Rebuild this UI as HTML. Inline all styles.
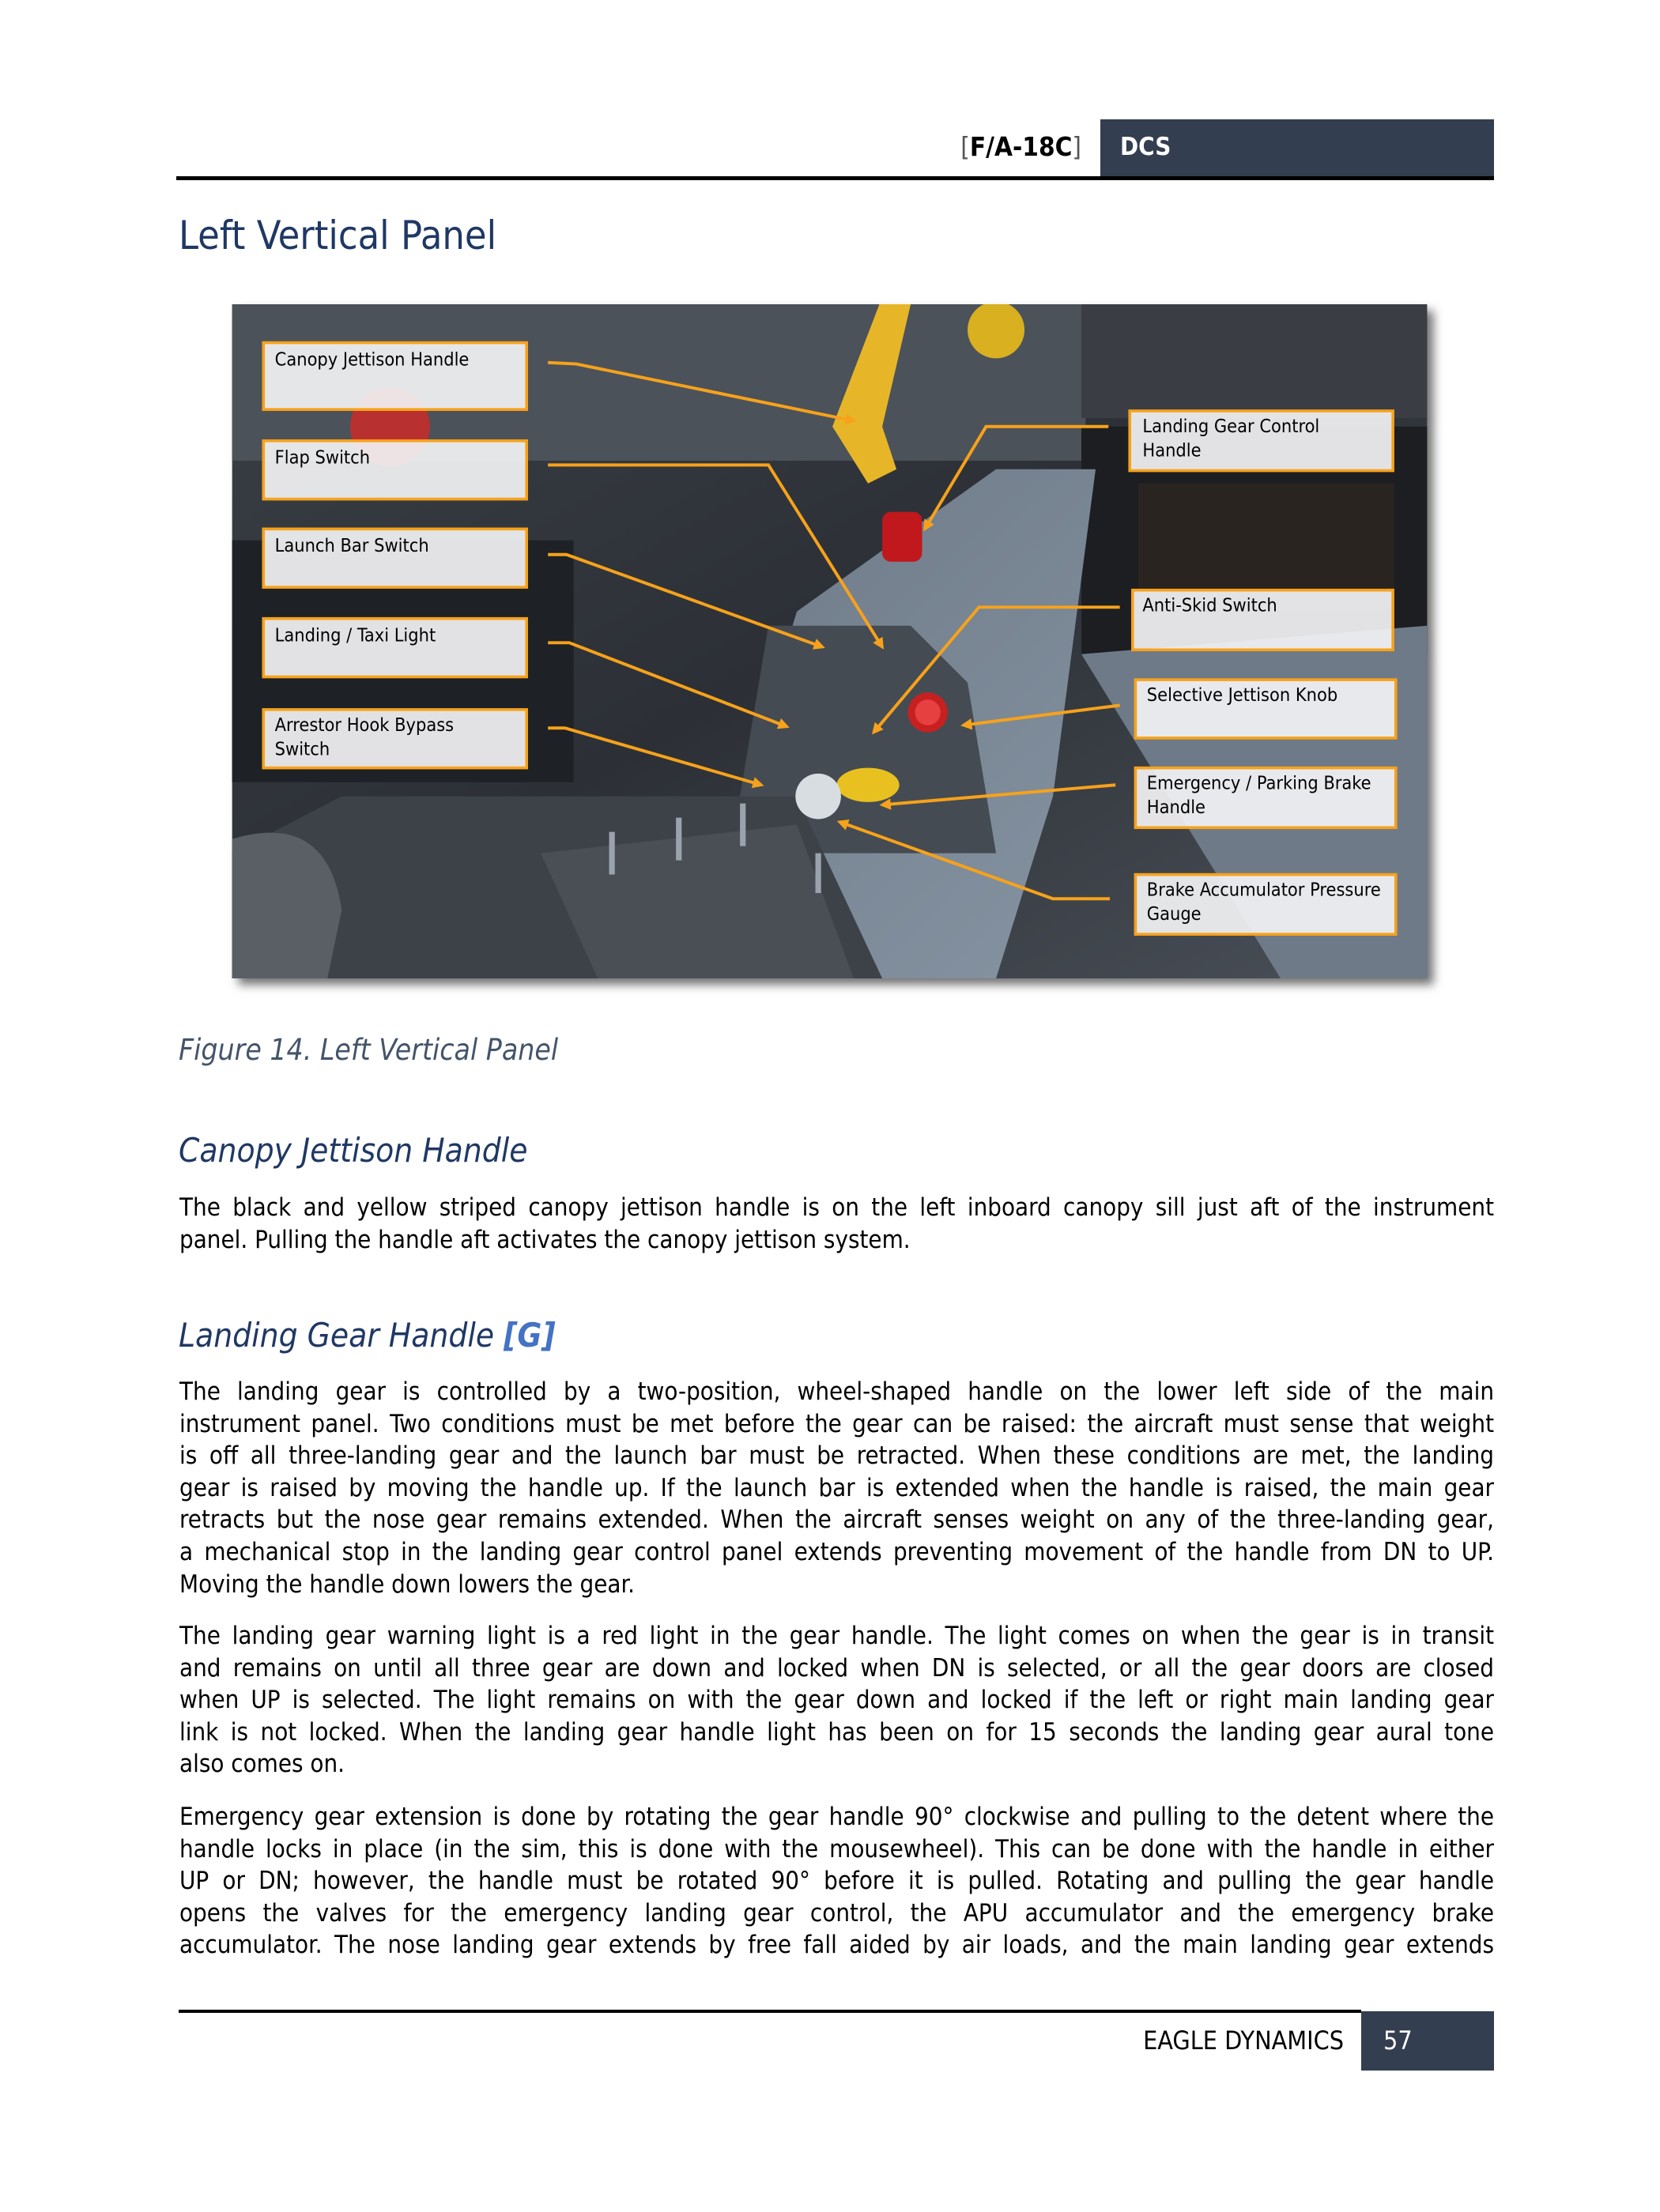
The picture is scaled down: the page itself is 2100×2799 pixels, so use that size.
<!DOCTYPE html>
<html><head><meta charset="utf-8"><style>
html,body{margin:0;padding:0;background:#fff}
body{width:2100px;height:2799px;position:relative;overflow:hidden;font-family:"DejaVu Sans Condensed","Liberation Sans",sans-serif}
.abs{position:absolute}
.hdrbox{left:1392px;top:151px;width:498px;height:76px;background:#333e50}
.hdrline{left:223px;top:223px;width:1667px;height:5px;background:#000}
.fa{right:732px;top:166px;font-size:33px;font-weight:bold;color:#000;letter-spacing:0px}
.fa span{color:#555;font-weight:normal}
.dcs{left:1417px;top:168px;font-size:31px;font-weight:bold;color:#fff}
.title{left:226px;top:269px;font-size:50px;color:#1f3864}
.cap{left:226px;top:1307px;font-size:37px;font-style:italic;color:#44546a}
.h2{left:226px;font-size:42px;font-style:italic;color:#1f3864}
.txt{left:227px;width:1663px;font-size:31px;color:#000;line-height:40.6px}
.txt div{text-align:justify;text-align-last:justify;white-space:nowrap;height:40.6px}
.txt div.l{text-align-last:left}
.fline{left:226px;top:2543px;width:1496px;height:4px;background:#000}
.fbox{left:1722px;top:2545px;width:168px;height:75px;background:#333e50}
.ed{right:400px;top:2563px;font-size:32px;color:#000}
.pg{left:1750px;top:2563px;font-size:32px;color:#fff}
</style></head><body>
<div class="abs hdrbox"></div>
<div class="abs hdrline"></div>
<div class="abs fa"><span>[</span>F/A-18C<span>]</span></div>
<div class="abs dcs">DCS</div>
<div class="abs title">Left Vertical Panel</div>

<svg class="abs" style="left:293px;top:385px;filter:drop-shadow(8px 8px 6px rgba(0,0,0,0.55))" width="1513" height="853" viewBox="163 214 840 474">
<defs>
<linearGradient id="bg" x1="0" y1="0" x2="1" y2="1"><stop offset="0" stop-color="#3a3f46"/><stop offset="0.5" stop-color="#2c3036"/><stop offset="1" stop-color="#4a5058"/></linearGradient>
<linearGradient id="pn" x1="0" y1="0" x2="1" y2="1"><stop offset="0" stop-color="#6a7582"/><stop offset="1" stop-color="#8593a2"/></linearGradient>
<marker id="ar" markerWidth="8" markerHeight="8" refX="6" refY="4" orient="auto" markerUnits="userSpaceOnUse"><path d="M0,0 L8,4 L0,8 Z" fill="#f7a21b"/></marker>
</defs>
<rect x="163" y="214" width="840" height="474" fill="url(#bg)"/>
<rect x="163" y="214" width="600" height="110" fill="#4c525a"/>
<rect x="163" y="380" width="240" height="170" fill="#1e2125"/>
<rect x="760" y="214" width="243" height="80" fill="#3a3e44"/>
<rect x="760" y="300" width="243" height="160" fill="#1c1e22"/>
<rect x="800" y="340" width="180" height="90" fill="#2a2420"/>
<path d="M760 460 L1003 440 L1003 688 L900 688 Z" fill="#6e7a88"/>
<path d="M560 430 L700 330 L770 330 L740 560 L700 688 L420 688 L380 620 L520 560 Z" fill="url(#pn)"/>
<path d="M540 440 L640 440 L680 480 L700 600 L560 600 L520 560 Z" fill="#454b52"/>
<path d="M240 560 L560 560 L620 688 L163 688 L163 600 Z" fill="#3d4249"/>
<path d="M380 600 L560 580 L600 688 L420 688 Z" fill="#4a4f56"/>
<path d="M163 590 Q230 570 240 640 L230 688 L163 688 Z" fill="#5a5f66"/>
<g fill="#9aa3ad"><rect x="428" y="585" width="4" height="30"/><rect x="475" y="575" width="4" height="30"/><rect x="520" y="565" width="4" height="30"/><rect x="573" y="600" width="4" height="28"/></g>
<path d="M618 214 L640 214 L620 300 L630 330 L610 340 L585 300 Z" fill="#e7b628"/>
<circle cx="700" cy="232" r="20" fill="#d8b020"/>
<rect x="620" y="360" width="28" height="35" rx="6" fill="#c0181c"/>
<circle cx="652" cy="501" r="14" fill="#c72020"/>
<circle cx="652" cy="501" r="9" fill="#e84040"/>
<ellipse cx="610" cy="552" rx="22" ry="12" fill="#e8c020"/>
<circle cx="575" cy="560" r="16" fill="#d8dde2"/>
<circle cx="274" cy="300" r="28" fill="#b83030"/>
<g fill="#f1f1f3" fill-opacity="0.93" stroke="#f7a21b" stroke-width="2">
<rect x="185" y="241" width="185" height="47"/>
<rect x="185" y="310" width="185" height="41"/>
<rect x="185" y="372" width="185" height="41"/>
<rect x="185" y="435" width="185" height="41"/>
<rect x="185" y="499" width="185" height="41"/>
<rect x="794" y="289" width="185" height="42"/>
<rect x="796" y="415" width="183" height="42"/>
<rect x="798" y="478" width="183" height="41"/>
<rect x="798" y="540" width="183" height="42"/>
<rect x="798" y="615" width="183" height="42"/>
</g>
<g font-family="DejaVu Sans Condensed, Liberation Sans, sans-serif" font-size="13" fill="#000">
<text x="193" y="257">Canopy Jettison Handle</text>
<text x="193" y="326">Flap Switch</text>
<text x="193" y="388">Launch Bar Switch</text>
<text x="193" y="451">Landing / Taxi Light</text>
<text x="193" y="514">Arrestor Hook Bypass</text>
<text x="193" y="531">Switch</text>
<text x="803" y="304">Landing Gear Control</text>
<text x="803" y="321">Handle</text>
<text x="803" y="430">Anti-Skid Switch</text>
<text x="806" y="493">Selective Jettison Knob</text>
<text x="806" y="555">Emergency / Parking Brake</text>
<text x="806" y="572">Handle</text>
<text x="806" y="630">Brake Accumulator Pressure</text>
<text x="806" y="647">Gauge</text>
</g>
<g fill="none" stroke="#f7a21b" stroke-width="2.2" marker-end="url(#ar)">
<polyline points="385,255 405,256 600,296"/>
<polyline points="385,327 540,327 620,455"/>
<polyline points="385,390 398,390 578,455"/>
<polyline points="385,452 400,452 553,511"/>
<polyline points="385,512 397,512 535,552"/>
<polyline points="779,300 693,300 650,372"/>
<polyline points="787,427 688,427 614,515"/>
<polyline points="787,496 677,510"/>
<polyline points="784,552 620,566"/>
<polyline points="780,632 740,632 590,578"/>
</g>
</svg>

<div class="abs cap">Figure 14. Left Vertical Panel</div>
<div class="abs h2" style="top:1431px">Canopy Jettison Handle</div>
<div class="abs txt" style="top:1508px">
<div>The black and yellow striped canopy jettison handle is on the left inboard canopy sill just aft of the instrument</div>
<div class="l">panel. Pulling the handle aft activates the canopy jettison system.</div>
</div>
<div class="abs h2" style="top:1665px">Landing Gear Handle <b style="color:#4472c4">[G]</b></div>
<div class="abs txt" style="top:1741px">
<div>The landing gear is controlled by a two-position, wheel-shaped handle on the lower left side of the main</div>
<div>instrument panel. Two conditions must be met before the gear can be raised: the aircraft must sense that weight</div>
<div>is off all three-landing gear and the launch bar must be retracted. When these conditions are met, the landing</div>
<div>gear is raised by moving the handle up. If the launch bar is extended when the handle is raised, the main gear</div>
<div>retracts but the nose gear remains extended. When the aircraft senses weight on any of the three-landing gear,</div>
<div>a mechanical stop in the landing gear control panel extends preventing movement of the handle from DN to UP.</div>
<div class="l">Moving the handle down lowers the gear.</div>
</div>
<div class="abs txt" style="top:2050px">
<div>The landing gear warning light is a red light in the gear handle. The light comes on when the gear is in transit</div>
<div>and remains on until all three gear are down and locked when DN is selected, or all the gear doors are closed</div>
<div>when UP is selected. The light remains on with the gear down and locked if the left or right main landing gear</div>
<div>link is not locked. When the landing gear handle light has been on for 15 seconds the landing gear aural tone</div>
<div class="l">also comes on.</div>
</div>
<div class="abs txt" style="top:2279px">
<div>Emergency gear extension is done by rotating the gear handle 90° clockwise and pulling to the detent where the</div>
<div>handle locks in place (in the sim, this is done with the mousewheel). This can be done with the handle in either</div>
<div>UP or DN; however, the handle must be rotated 90° before it is pulled. Rotating and pulling the gear handle</div>
<div>opens the valves for the emergency landing gear control, the APU accumulator and the emergency brake</div>
<div>accumulator. The nose landing gear extends by free fall aided by air loads, and the main landing gear extends</div>
</div>
<div class="abs fline"></div>
<div class="abs fbox"></div>
<div class="abs ed">EAGLE DYNAMICS</div>
<div class="abs pg">57</div>
</body></html>
